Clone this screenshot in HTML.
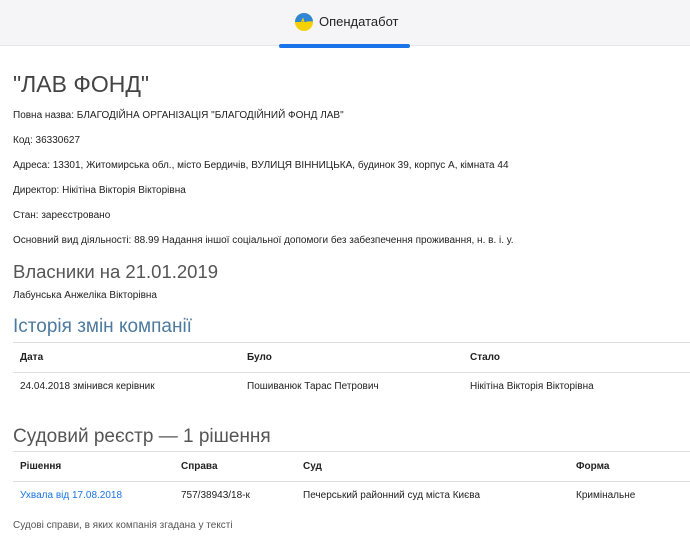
<!DOCTYPE html>
<html><head><meta charset="utf-8"><style>
*{margin:0;padding:0;box-sizing:border-box}
body{width:690px;height:551px;background:#fff;font-family:"Liberation Sans","DejaVu Sans",sans-serif;color:#222;position:relative;overflow:hidden}
.hdr{position:absolute;left:0;top:0;width:690px;height:46px;background:#f5f5f7;border-bottom:1px solid #e6e6ea}
.bar{position:absolute;left:279px;top:44px;width:131px;height:4px;background:#1a73e8;border-radius:2px}
.logo{position:absolute;left:295px;top:13px;width:18px;height:18px;border-radius:50%;overflow:hidden;background:#f7d000}
.logo:before{content:"";position:absolute;left:0;top:0;width:18px;height:9px;background:#2f86d6}
.brand{position:absolute;left:319px;top:14px;font-size:13px;color:#222}
.a{position:absolute;left:13px;white-space:nowrap}
.s{font-size:10px;color:#222}
.h{font-size:19px;color:#555}
.line{position:absolute;left:13px;width:677px;height:1px;background:#dedee2}
.th{font-weight:bold;font-size:10px}
a{color:#1a73e8;text-decoration:none}
</style></head><body>
<div class="hdr"></div>
<div class="logo"><svg width="18" height="18" style="position:absolute;left:0;top:0"><path d="M0 10 L6 10 L8 6 L10 13 L12 9 L18 9" stroke="#f7d000" stroke-width="1.2" fill="none"/></svg></div>
<div class="brand">Опендатабот</div>
<div class="bar"></div>

<div class="a" style="top:71px;font-size:23px;color:#444">"ЛАВ ФОНД"</div>
<div class="a s" style="top:110px">Повна назва: БЛАГОДІЙНА ОРГАНІЗАЦІЯ "БЛАГОДІЙНИЙ ФОНД ЛАВ"</div>
<div class="a s" style="top:135px">Код: 36330627</div>
<div class="a s" style="top:160px">Адреса: 13301, Житомирська обл., місто Бердичів, ВУЛИЦЯ ВІННИЦЬКА, будинок 39, корпус А, кімната 44</div>
<div class="a s" style="top:185px">Директор: Нікітіна Вікторія Вікторівна</div>
<div class="a s" style="top:210px">Стан: зареєстровано</div>
<div class="a s" style="top:235px">Основний вид діяльності: 88.99 Надання іншої соціальної допомоги без забезпечення проживання, н. в. і. у.</div>

<div class="a h" style="top:261px;font-size:18.5px">Власники на 21.01.2019</div>
<div class="a s" style="top:290px">Лабунська Анжеліка Вікторівна</div>

<div class="a h" style="top:316px;color:#4d7a9e">Історія змін компанії</div>
<div class="line" style="top:342px"></div>
<div class="a th" style="top:352px;left:20px">Дата</div>
<div class="a th" style="top:352px;left:247px">Було</div>
<div class="a th" style="top:352px;left:470px">Стало</div>
<div class="line" style="top:372px"></div>
<div class="a s" style="top:381px;left:20px">24.04.2018 змінився керівник</div>
<div class="a s" style="top:381px;left:247px">Пошиванюк Тарас Петрович</div>
<div class="a s" style="top:381px;left:470px">Нікітіна Вікторія Вікторівна</div>

<div class="a h" style="top:426px">Судовий реєстр — 1 рішення</div>
<div class="line" style="top:451px"></div>
<div class="a th" style="top:461px;left:20px">Рішення</div>
<div class="a th" style="top:461px;left:181px">Справа</div>
<div class="a th" style="top:461px;left:303px">Суд</div>
<div class="a th" style="top:461px;left:576px">Форма</div>
<div class="line" style="top:481px"></div>
<div class="a s" style="top:490px;left:20px"><a>Ухвала від 17.08.2018</a></div>
<div class="a s" style="top:490px;left:181px">757/38943/18-к</div>
<div class="a s" style="top:490px;left:303px">Печерський районний суд міста Києва</div>
<div class="a s" style="top:490px;left:576px">Кримінальне</div>
<div class="a s" style="top:520px;color:#555">Судові справи, в яких компанія згадана у тексті</div>
</body></html>
